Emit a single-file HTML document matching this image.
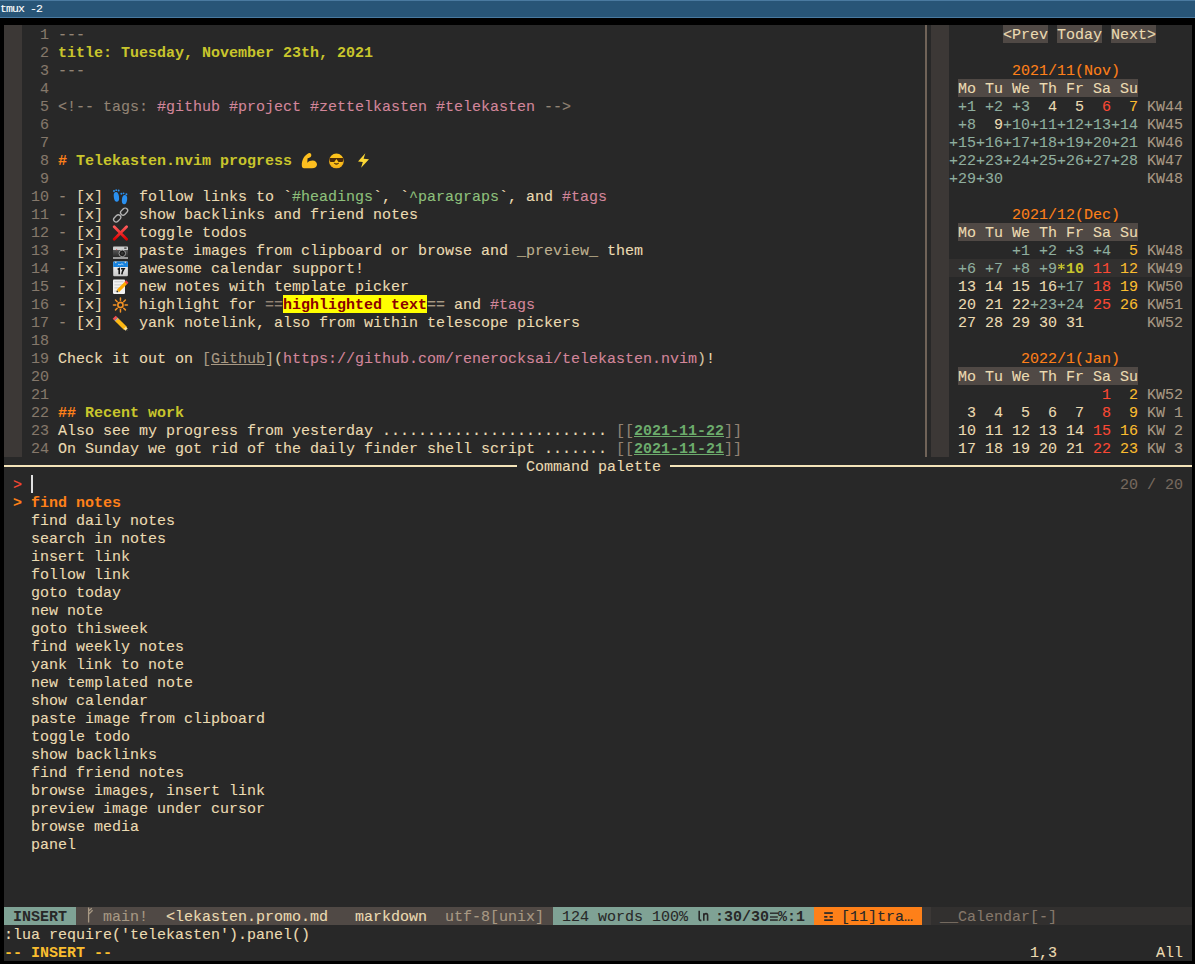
<!DOCTYPE html>
<html><head><meta charset="utf-8"><style>
html,body{margin:0;padding:0;}
body{width:1195px;height:964px;background:#000;position:relative;overflow:hidden;font-family:"Liberation Mono",monospace;font-size:15px;}
div{position:absolute;}
.t{position:absolute;white-space:pre;line-height:18px;height:18px;-webkit-font-smoothing:antialiased;-webkit-text-stroke:0.1px;}
</style></head><body>
<div style="left:0px;top:0px;width:1195px;height:18px;background:#285577;"></div>
<div style="left:0px;top:0px;width:1195px;height:1px;background:#4a7aa0;"></div>
<div style="left:0px;top:17px;width:1195px;height:1px;background:#4a7aa0;"></div>
<span class="t" style="left:0px;top:0px;color:#ffffff;font-size:11.5px;letter-spacing:-0.9px;line-height:17px;">tmux -2</span>
<div style="left:4px;top:25px;width:1188px;height:936px;background:#282828;"></div>
<div style="left:4px;top:25px;width:18px;height:432px;background:#3c3836;"></div>
<div style="left:925px;top:25px;width:2px;height:432px;background:#706358;"></div>
<div style="left:931px;top:25px;width:18px;height:432px;background:#3c3836;"></div>
<span class="t" style="left:22px;top:27px;color:#85786b;">  1</span>
<span class="t" style="left:58px;top:27px;color:#928374;">---</span>
<span class="t" style="left:22px;top:45px;color:#85786b;">  2</span>
<span class="t" style="left:58px;top:45px;color:#c8c52c;font-weight:bold;-webkit-text-stroke:0;">title: Tuesday, November 23th, 2021</span>
<span class="t" style="left:22px;top:63px;color:#85786b;">  3</span>
<span class="t" style="left:58px;top:63px;color:#928374;">---</span>
<span class="t" style="left:22px;top:81px;color:#85786b;">  4</span>
<span class="t" style="left:22px;top:99px;color:#85786b;">  5</span>
<span class="t" style="left:58px;top:99px;color:#928374;">&lt;!-- tags: </span>
<span class="t" style="left:157px;top:99px;color:#d3869b;">#github</span>
<span class="t" style="left:229px;top:99px;color:#d3869b;">#project</span>
<span class="t" style="left:310px;top:99px;color:#d3869b;">#zettelkasten</span>
<span class="t" style="left:436px;top:99px;color:#d3869b;">#telekasten</span>
<span class="t" style="left:535px;top:99px;color:#928374;"> --&gt;</span>
<span class="t" style="left:22px;top:117px;color:#85786b;">  6</span>
<span class="t" style="left:22px;top:135px;color:#85786b;">  7</span>
<span class="t" style="left:22px;top:153px;color:#85786b;">  8</span>
<span class="t" style="left:58px;top:153px;color:#fe8019;font-weight:bold;-webkit-text-stroke:0;"># </span>
<span class="t" style="left:76px;top:153px;color:#c8c52c;font-weight:bold;-webkit-text-stroke:0;">Telekasten.nvim progress</span>
<span class="t" style="left:22px;top:171px;color:#85786b;">  9</span>
<span class="t" style="left:22px;top:189px;color:#85786b;"> 10</span>
<span class="t" style="left:58px;top:189px;color:#928374;">- </span>
<span class="t" style="left:76px;top:189px;color:#ebdbb2;">[x] </span>
<span class="t" style="left:130px;top:189px;color:#ebdbb2;"> follow links to `</span>
<span class="t" style="left:292px;top:189px;color:#8ec07c;">#headings</span>
<span class="t" style="left:373px;top:189px;color:#ebdbb2;">`, `</span>
<span class="t" style="left:409px;top:189px;color:#8ec07c;">^paragraps</span>
<span class="t" style="left:499px;top:189px;color:#ebdbb2;">`, and </span>
<span class="t" style="left:562px;top:189px;color:#d3869b;">#tags</span>
<span class="t" style="left:22px;top:207px;color:#85786b;"> 11</span>
<span class="t" style="left:58px;top:207px;color:#928374;">- </span>
<span class="t" style="left:76px;top:207px;color:#ebdbb2;">[x] </span>
<span class="t" style="left:130px;top:207px;color:#ebdbb2;"> show backlinks and friend notes</span>
<span class="t" style="left:22px;top:225px;color:#85786b;"> 12</span>
<span class="t" style="left:58px;top:225px;color:#928374;">- </span>
<span class="t" style="left:76px;top:225px;color:#ebdbb2;">[x] </span>
<span class="t" style="left:130px;top:225px;color:#ebdbb2;"> toggle todos</span>
<span class="t" style="left:22px;top:243px;color:#85786b;"> 13</span>
<span class="t" style="left:58px;top:243px;color:#928374;">- </span>
<span class="t" style="left:76px;top:243px;color:#ebdbb2;">[x] </span>
<span class="t" style="left:130px;top:243px;color:#ebdbb2;"> paste images from clipboard or browse and </span>
<span class="t" style="left:517px;top:243px;color:#bfb08f;">_preview_</span>
<span class="t" style="left:598px;top:243px;color:#ebdbb2;"> them</span>
<span class="t" style="left:22px;top:261px;color:#85786b;"> 14</span>
<span class="t" style="left:58px;top:261px;color:#928374;">- </span>
<span class="t" style="left:76px;top:261px;color:#ebdbb2;">[x] </span>
<span class="t" style="left:130px;top:261px;color:#ebdbb2;"> awesome calendar support!</span>
<span class="t" style="left:22px;top:279px;color:#85786b;"> 15</span>
<span class="t" style="left:58px;top:279px;color:#928374;">- </span>
<span class="t" style="left:76px;top:279px;color:#ebdbb2;">[x] </span>
<span class="t" style="left:130px;top:279px;color:#ebdbb2;"> new notes with template picker</span>
<span class="t" style="left:22px;top:297px;color:#85786b;"> 16</span>
<span class="t" style="left:58px;top:297px;color:#928374;">- </span>
<span class="t" style="left:76px;top:297px;color:#ebdbb2;">[x] </span>
<span class="t" style="left:130px;top:297px;color:#ebdbb2;"> highlight for </span>
<span class="t" style="left:265px;top:297px;color:#928374;">==</span>
<div style="left:283px;top:295px;width:144px;height:18px;background:#ffff00;"></div>
<span class="t" style="left:283px;top:297px;color:#8b0000;font-weight:bold;-webkit-text-stroke:0;">highlighted text</span>
<span class="t" style="left:427px;top:297px;color:#a89984;">==</span>
<span class="t" style="left:445px;top:297px;color:#ebdbb2;"> and </span>
<span class="t" style="left:490px;top:297px;color:#d3869b;">#tags</span>
<span class="t" style="left:22px;top:315px;color:#85786b;"> 17</span>
<span class="t" style="left:58px;top:315px;color:#928374;">- </span>
<span class="t" style="left:76px;top:315px;color:#ebdbb2;">[x] </span>
<span class="t" style="left:130px;top:315px;color:#ebdbb2;"> yank notelink, also from within telescope pickers</span>
<span class="t" style="left:22px;top:333px;color:#85786b;"> 18</span>
<span class="t" style="left:22px;top:351px;color:#85786b;"> 19</span>
<span class="t" style="left:58px;top:351px;color:#ebdbb2;">Check it out on </span>
<span class="t" style="left:202px;top:351px;color:#a89984;">[</span>
<span class="t" style="left:211px;top:351px;color:#a89984;text-decoration:underline;text-underline-offset:1px;">Github</span>
<span class="t" style="left:265px;top:351px;color:#bdae93;">]</span>
<span class="t" style="left:274px;top:351px;color:#d5c4a1;">(</span>
<span class="t" style="left:283px;top:351px;color:#d3869b;">https:</span>
<span class="t" style="left:337px;top:351px;color:#d3869b;">//github.com/renerocksai/telekasten.nvim</span>
<span class="t" style="left:697px;top:351px;color:#d5c4a1;">)</span>
<span class="t" style="left:706px;top:351px;color:#ebdbb2;">!</span>
<span class="t" style="left:22px;top:369px;color:#85786b;"> 20</span>
<span class="t" style="left:22px;top:387px;color:#85786b;"> 21</span>
<span class="t" style="left:22px;top:405px;color:#85786b;"> 22</span>
<span class="t" style="left:58px;top:405px;color:#fe8019;font-weight:bold;-webkit-text-stroke:0;">## </span>
<span class="t" style="left:85px;top:405px;color:#c8c52c;font-weight:bold;-webkit-text-stroke:0;">Recent work</span>
<span class="t" style="left:22px;top:423px;color:#85786b;"> 23</span>
<span class="t" style="left:58px;top:423px;color:#ebdbb2;">Also see my progress from yesterday ......................... </span>
<span class="t" style="left:616px;top:423px;color:#928374;">[[</span>
<span class="t" style="left:634px;top:423px;color:#6cab6c;font-weight:bold;-webkit-text-stroke:0;text-decoration:underline;text-underline-offset:1px;">2021-11-22</span>
<span class="t" style="left:724px;top:423px;color:#928374;">]]</span>
<span class="t" style="left:22px;top:441px;color:#85786b;"> 24</span>
<span class="t" style="left:58px;top:441px;color:#ebdbb2;">On Sunday we got rid of the daily finder shell script ....... </span>
<span class="t" style="left:616px;top:441px;color:#928374;">[[</span>
<span class="t" style="left:634px;top:441px;color:#6cab6c;font-weight:bold;-webkit-text-stroke:0;text-decoration:underline;text-underline-offset:1px;">2021-11-21</span>
<span class="t" style="left:724px;top:441px;color:#928374;">]]</span>
<div style="left:1003px;top:25px;width:45px;height:18px;background:#504945;"></div>
<span class="t" style="left:1003px;top:27px;color:#ebdbb2;">&lt;Prev</span>
<div style="left:1057px;top:25px;width:45px;height:18px;background:#504945;"></div>
<span class="t" style="left:1057px;top:27px;color:#ebdbb2;">Today</span>
<div style="left:1111px;top:25px;width:45px;height:18px;background:#504945;"></div>
<span class="t" style="left:1111px;top:27px;color:#ebdbb2;">Next&gt;</span>
<span class="t" style="left:1012px;top:63px;color:#fe8019;">2021/11(Nov)</span>
<div style="left:958px;top:79px;width:180px;height:18px;background:#504945;"></div>
<span class="t" style="left:958px;top:81px;color:#ebdbb2;">Mo Tu We Th Fr Sa Su</span>
<span class="t" style="left:949px;top:99px;color:#8fae9f;"> +1</span>
<span class="t" style="left:976px;top:99px;color:#8fae9f;"> +2</span>
<span class="t" style="left:1003px;top:99px;color:#8fae9f;"> +3</span>
<span class="t" style="left:1030px;top:99px;color:#ebdbb2;">  4</span>
<span class="t" style="left:1057px;top:99px;color:#ebdbb2;">  5</span>
<span class="t" style="left:1084px;top:99px;color:#fb4934;">  6</span>
<span class="t" style="left:1111px;top:99px;color:#fabd2f;">  7</span>
<span class="t" style="left:1147px;top:99px;color:#a89984;">KW44</span>
<span class="t" style="left:949px;top:117px;color:#8fae9f;"> +8</span>
<span class="t" style="left:976px;top:117px;color:#ebdbb2;">  9</span>
<span class="t" style="left:1003px;top:117px;color:#8fae9f;">+10</span>
<span class="t" style="left:1030px;top:117px;color:#8fae9f;">+11</span>
<span class="t" style="left:1057px;top:117px;color:#8fae9f;">+12</span>
<span class="t" style="left:1084px;top:117px;color:#8fae9f;">+13</span>
<span class="t" style="left:1111px;top:117px;color:#8fae9f;">+14</span>
<span class="t" style="left:1147px;top:117px;color:#a89984;">KW45</span>
<span class="t" style="left:949px;top:135px;color:#8fae9f;">+15</span>
<span class="t" style="left:976px;top:135px;color:#8fae9f;">+16</span>
<span class="t" style="left:1003px;top:135px;color:#8fae9f;">+17</span>
<span class="t" style="left:1030px;top:135px;color:#8fae9f;">+18</span>
<span class="t" style="left:1057px;top:135px;color:#8fae9f;">+19</span>
<span class="t" style="left:1084px;top:135px;color:#8fae9f;">+20</span>
<span class="t" style="left:1111px;top:135px;color:#8fae9f;">+21</span>
<span class="t" style="left:1147px;top:135px;color:#a89984;">KW46</span>
<span class="t" style="left:949px;top:153px;color:#8fae9f;">+22</span>
<span class="t" style="left:976px;top:153px;color:#8fae9f;">+23</span>
<span class="t" style="left:1003px;top:153px;color:#8fae9f;">+24</span>
<span class="t" style="left:1030px;top:153px;color:#8fae9f;">+25</span>
<span class="t" style="left:1057px;top:153px;color:#8fae9f;">+26</span>
<span class="t" style="left:1084px;top:153px;color:#8fae9f;">+27</span>
<span class="t" style="left:1111px;top:153px;color:#8fae9f;">+28</span>
<span class="t" style="left:1147px;top:153px;color:#a89984;">KW47</span>
<span class="t" style="left:949px;top:171px;color:#8fae9f;">+29</span>
<span class="t" style="left:976px;top:171px;color:#8fae9f;">+30</span>
<span class="t" style="left:1147px;top:171px;color:#a89984;">KW48</span>
<div style="left:949px;top:259px;width:243px;height:18px;background:#32302f;"></div>
<span class="t" style="left:1012px;top:207px;color:#fe8019;">2021/12(Dec)</span>
<div style="left:958px;top:223px;width:180px;height:18px;background:#504945;"></div>
<span class="t" style="left:958px;top:225px;color:#ebdbb2;">Mo Tu We Th Fr Sa Su</span>
<span class="t" style="left:1003px;top:243px;color:#8fae9f;"> +1</span>
<span class="t" style="left:1030px;top:243px;color:#8fae9f;"> +2</span>
<span class="t" style="left:1057px;top:243px;color:#8fae9f;"> +3</span>
<span class="t" style="left:1084px;top:243px;color:#8fae9f;"> +4</span>
<span class="t" style="left:1111px;top:243px;color:#fabd2f;">  5</span>
<span class="t" style="left:1147px;top:243px;color:#a89984;">KW48</span>
<span class="t" style="left:949px;top:261px;color:#8fae9f;"> +6</span>
<span class="t" style="left:976px;top:261px;color:#8fae9f;"> +7</span>
<span class="t" style="left:1003px;top:261px;color:#8fae9f;"> +8</span>
<span class="t" style="left:1030px;top:261px;color:#8fae9f;"> +9</span>
<span class="t" style="left:1084px;top:261px;color:#fb4934;"> 11</span>
<span class="t" style="left:1111px;top:261px;color:#fabd2f;"> 12</span>
<span class="t" style="left:1147px;top:261px;color:#a89984;">KW49</span>
<span class="t" style="left:949px;top:279px;color:#ebdbb2;"> 13</span>
<span class="t" style="left:976px;top:279px;color:#ebdbb2;"> 14</span>
<span class="t" style="left:1003px;top:279px;color:#ebdbb2;"> 15</span>
<span class="t" style="left:1030px;top:279px;color:#ebdbb2;"> 16</span>
<span class="t" style="left:1057px;top:279px;color:#8fae9f;">+17</span>
<span class="t" style="left:1084px;top:279px;color:#fb4934;"> 18</span>
<span class="t" style="left:1111px;top:279px;color:#fabd2f;"> 19</span>
<span class="t" style="left:1147px;top:279px;color:#a89984;">KW50</span>
<span class="t" style="left:949px;top:297px;color:#ebdbb2;"> 20</span>
<span class="t" style="left:976px;top:297px;color:#ebdbb2;"> 21</span>
<span class="t" style="left:1003px;top:297px;color:#ebdbb2;"> 22</span>
<span class="t" style="left:1030px;top:297px;color:#8fae9f;">+23</span>
<span class="t" style="left:1057px;top:297px;color:#8fae9f;">+24</span>
<span class="t" style="left:1084px;top:297px;color:#fb4934;"> 25</span>
<span class="t" style="left:1111px;top:297px;color:#fabd2f;"> 26</span>
<span class="t" style="left:1147px;top:297px;color:#a89984;">KW51</span>
<span class="t" style="left:949px;top:315px;color:#ebdbb2;"> 27</span>
<span class="t" style="left:976px;top:315px;color:#ebdbb2;"> 28</span>
<span class="t" style="left:1003px;top:315px;color:#ebdbb2;"> 29</span>
<span class="t" style="left:1030px;top:315px;color:#ebdbb2;"> 30</span>
<span class="t" style="left:1057px;top:315px;color:#ebdbb2;"> 31</span>
<span class="t" style="left:1147px;top:315px;color:#a89984;">KW52</span>
<svg style="position:absolute;left:1054px;top:259px" width="15" height="15" viewBox="0 0 15 15"><g stroke="#c8c52c" stroke-width="1.3" transform="translate(-1054 -259)"><path d="M1061.4 263.2 V270 M1058.2 264.8 L1064.6 268.4 M1058.2 268.4 L1064.6 264.8"/></g></svg>
<span class="t" style="left:1066px;top:261px;color:#c8c52c;font-weight:bold;-webkit-text-stroke:0;">10</span>
<span class="t" style="left:1021px;top:351px;color:#fe8019;">2022/1(Jan)</span>
<div style="left:958px;top:367px;width:180px;height:18px;background:#504945;"></div>
<span class="t" style="left:958px;top:369px;color:#ebdbb2;">Mo Tu We Th Fr Sa Su</span>
<span class="t" style="left:1084px;top:387px;color:#fb4934;">  1</span>
<span class="t" style="left:1111px;top:387px;color:#fabd2f;">  2</span>
<span class="t" style="left:1147px;top:387px;color:#a89984;">KW52</span>
<span class="t" style="left:949px;top:405px;color:#ebdbb2;">  3</span>
<span class="t" style="left:976px;top:405px;color:#ebdbb2;">  4</span>
<span class="t" style="left:1003px;top:405px;color:#ebdbb2;">  5</span>
<span class="t" style="left:1030px;top:405px;color:#ebdbb2;">  6</span>
<span class="t" style="left:1057px;top:405px;color:#ebdbb2;">  7</span>
<span class="t" style="left:1084px;top:405px;color:#fb4934;">  8</span>
<span class="t" style="left:1111px;top:405px;color:#fabd2f;">  9</span>
<span class="t" style="left:1147px;top:405px;color:#a89984;">KW 1</span>
<span class="t" style="left:949px;top:423px;color:#ebdbb2;"> 10</span>
<span class="t" style="left:976px;top:423px;color:#ebdbb2;"> 11</span>
<span class="t" style="left:1003px;top:423px;color:#ebdbb2;"> 12</span>
<span class="t" style="left:1030px;top:423px;color:#ebdbb2;"> 13</span>
<span class="t" style="left:1057px;top:423px;color:#ebdbb2;"> 14</span>
<span class="t" style="left:1084px;top:423px;color:#fb4934;"> 15</span>
<span class="t" style="left:1111px;top:423px;color:#fabd2f;"> 16</span>
<span class="t" style="left:1147px;top:423px;color:#a89984;">KW 2</span>
<span class="t" style="left:949px;top:441px;color:#ebdbb2;"> 17</span>
<span class="t" style="left:976px;top:441px;color:#ebdbb2;"> 18</span>
<span class="t" style="left:1003px;top:441px;color:#ebdbb2;"> 19</span>
<span class="t" style="left:1030px;top:441px;color:#ebdbb2;"> 20</span>
<span class="t" style="left:1057px;top:441px;color:#ebdbb2;"> 21</span>
<span class="t" style="left:1084px;top:441px;color:#fb4934;"> 22</span>
<span class="t" style="left:1111px;top:441px;color:#fabd2f;"> 23</span>
<span class="t" style="left:1147px;top:441px;color:#a89984;">KW 3</span>
<svg style="position:absolute;left:298px;top:150px" width="24" height="20" viewBox="0 0 24 20"><path d="M11 3 C12.6 2.6 13.8 4.4 13.2 6 C12.7 7.4 11.2 8 9.6 8.3 L9.3 12.8 C10.6 11.2 12.5 10.5 14.6 10.5 C17.2 10.5 19 12.2 19 14.6 C19 17 17 18.2 14 18.2 L6 18.2 C4.6 18.2 3.8 17.2 3.8 15.2 C3.8 10 6 5.5 11 3 Z" fill="#fdbf1f"/></svg>
<svg style="position:absolute;left:325px;top:150px" width="24" height="20" viewBox="0 0 24 20"><defs><radialGradient id="fg" cx="0.5" cy="0.4" r="0.6"><stop offset="0.6" stop-color="#fcc21b"/><stop offset="1" stop-color="#f0a818"/></radialGradient></defs><circle cx="11.4" cy="10.9" r="7.4" fill="url(#fg)"/><path d="M4.4 8.1 L18.4 8.1 L18.1 11.2 Q17.8 11.9 16.8 11.9 L13.5 11.9 L11.4 8.9 L9.3 11.9 L6 11.9 Q5 11.9 4.7 11.2 Z" fill="#4a2a0a"/><path d="M8.9 13.2 Q11.4 16 13.9 13.2 Q11.4 14 8.9 13.2 Z" fill="#5a3510" stroke="#5a3510" stroke-width="0.6"/></svg>
<svg style="position:absolute;left:352px;top:150px" width="24" height="20" viewBox="0 0 24 20"><polygon points="13.3,3.3 6,11.4 10.8,12 9.1,17.8 17,9.3 11.6,8.7" fill="#fdd835"/></svg>
<svg style="position:absolute;left:108px;top:187px" width="24" height="18" viewBox="0 0 24 18"><ellipse cx="8.4" cy="9.8" rx="2.6" ry="4.9" fill="#2a90f0" transform="rotate(-8 8.4 9.8)"/><circle cx="6" cy="4" r="1" fill="#2a90f0"/><circle cx="8.2" cy="3.2" r="0.9" fill="#2a90f0"/><circle cx="10.6" cy="3.6" r="1" fill="#2a90f0"/><ellipse cx="16.5" cy="12.6" rx="2.6" ry="4.6" fill="#2a90f0" transform="rotate(8 16.5 12.6)"/><circle cx="13.4" cy="6.8" r="1" fill="#2a90f0"/><circle cx="15.6" cy="6.3" r="0.9" fill="#2a90f0"/><circle cx="18.4" cy="7.2" r="1" fill="#2a90f0"/></svg>
<svg style="position:absolute;left:108px;top:205px" width="24" height="18" viewBox="0 0 24 18"><rect x="13.6" y="2.6" width="5" height="8" rx="2.5" fill="none" stroke="#b4b4b4" stroke-width="1.3" transform="rotate(45 16.1 6.6)"/><rect x="6.7" y="9.4" width="5" height="8" rx="2.5" fill="none" stroke="#b4b4b4" stroke-width="1.3" transform="rotate(45 9.2 13.4)"/></svg>
<svg style="position:absolute;left:108px;top:223px" width="24" height="18" viewBox="0 0 24 18"><defs><linearGradient id="xg" x1="0" y1="0" x2="0" y2="1"><stop offset="0" stop-color="#ff5a5a"/><stop offset="1" stop-color="#e00000"/></linearGradient></defs><path d="M6.2 3.8 L18.6 16.3 M18.6 3.8 L6.2 16.3" stroke="url(#xg)" stroke-width="2.7" stroke-linecap="round"/></svg>
<svg style="position:absolute;left:108px;top:241px" width="24" height="18" viewBox="0 0 24 18"><defs><linearGradient id="camg" x1="0" y1="0" x2="0" y2="1"><stop offset="0" stop-color="#555"/><stop offset="1" stop-color="#2a2a2a"/></linearGradient></defs><rect x="5" y="5.6" width="15" height="3.6" rx="0.8" fill="#cfcfcf"/><rect x="5" y="9.2" width="15" height="6.6" fill="url(#camg)"/><rect x="5" y="16" width="15" height="2" fill="#9a9a9a"/><circle cx="14.3" cy="12.4" r="3.3" fill="#1c1c1c" stroke="#a8a8a8" stroke-width="0.9"/><circle cx="14.3" cy="12.4" r="1.3" fill="#3a3a3a"/><rect x="16" y="6.4" width="2.8" height="1.4" rx="0.7" fill="#3a3a3a"/><circle cx="8.6" cy="8.6" r="0.6" fill="#e06060"/></svg>
<svg style="position:absolute;left:108px;top:259px" width="24" height="18" viewBox="0 0 24 18"><defs><linearGradient id="cg" x1="0" y1="0" x2="0" y2="1"><stop offset="0" stop-color="#ffffff"/><stop offset="1" stop-color="#c8c8c8"/></linearGradient></defs><rect x="5.2" y="2.6" width="14.7" height="14.7" rx="1" fill="url(#cg)"/><path d="M5.2 3.6 Q5.2 2.6 6.2 2.6 L18.9 2.6 Q19.9 2.6 19.9 3.6 L19.9 8 L5.2 8 Z" fill="#1582e0"/><circle cx="7.8" cy="3.4" r="0.8" fill="#d8d0c0"/><circle cx="17.4" cy="3.4" r="0.8" fill="#d8d0c0"/><path d="M10 6.2 Q11 4.4 11.4 5.6 Q12.4 6.4 13.2 5 Q14 4.6 15.4 5.8" stroke="#b8dcf8" stroke-width="1" fill="none"/><path d="M9.6 10.4 L11.2 9.6 V15.3 M13 9.8 H16 Q14.5 12 13.8 15.3" stroke="#151515" stroke-width="1.6" fill="none"/></svg>
<svg style="position:absolute;left:108px;top:277px" width="24" height="18" viewBox="0 0 24 18"><rect x="5" y="2.6" width="12" height="14.3" rx="0.8" fill="#f2f2f2"/><path d="M6.4 4.8 H15.5 M6.4 7.9 H15.5 M6.4 10.9 H11.5 M6.4 14 H8.5" stroke="#c8c8c8" stroke-width="1"/><path d="M10 13.8 L18.2 5.6" stroke="#ffaa00" stroke-width="3.3"/><path d="M17.8 6 L19.3 4.5" stroke="#f04040" stroke-width="3.3"/><path d="M9.2 14.6 L10.3 13.5" stroke="#f8d070" stroke-width="2.5"/><circle cx="9.3" cy="14.4" r="0.9" fill="#333"/></svg>
<svg style="position:absolute;left:108px;top:295px" width="24" height="18" viewBox="0 0 24 18"><circle cx="12.45" cy="9.94" r="2.6" fill="none" stroke="#f39224" stroke-width="1.6"/><path d="M17.05 9.94 L19.45 9.94" stroke="#f39224" stroke-width="1.5" stroke-linecap="round"/><path d="M15.70 13.19 L17.40 14.89" stroke="#f39224" stroke-width="1.5" stroke-linecap="round"/><path d="M12.45 14.54 L12.45 16.94" stroke="#f39224" stroke-width="1.5" stroke-linecap="round"/><path d="M9.20 13.19 L7.50 14.89" stroke="#f39224" stroke-width="1.5" stroke-linecap="round"/><path d="M7.85 9.94 L5.45 9.94" stroke="#f39224" stroke-width="1.5" stroke-linecap="round"/><path d="M9.20 6.69 L7.50 4.99" stroke="#f39224" stroke-width="1.5" stroke-linecap="round"/><path d="M12.45 5.34 L12.45 2.94" stroke="#f39224" stroke-width="1.5" stroke-linecap="round"/><path d="M15.70 6.69 L17.40 4.99" stroke="#f39224" stroke-width="1.5" stroke-linecap="round"/></svg>
<svg style="position:absolute;left:108px;top:313px" width="24" height="18" viewBox="0 0 24 18"><path d="M8.2 6.2 L17.6 15.6" stroke="#fdb813" stroke-width="4.3"/><path d="M6.2 4.2 L8 6" stroke="#f25050" stroke-width="4.3"/><path d="M8 6 L8.8 6.8" stroke="#aab" stroke-width="4.3"/><path d="M16.8 14.8 L18.6 16.6" stroke="#fbe39a" stroke-width="3"/><circle cx="19.2" cy="17.2" r="0.8" fill="#444"/></svg>
<div style="left:4px;top:465px;width:1188px;height:2px;background:#f4e4b9;"></div>
<div style="left:517px;top:457px;width:153px;height:18px;background:#282828;"></div>
<span class="t" style="left:526px;top:459px;color:#ebdbb2;">Command palette</span>
<span class="t" style="left:13px;top:477px;color:#fb4934;">&gt;</span>
<div style="left:31px;top:475px;width:2px;height:18px;background:#e0e0e0;"></div>
<span class="t" style="left:1120px;top:477px;color:#776a5f;">20 / 20</span>
<span class="t" style="left:13px;top:495px;color:#fe8019;font-weight:bold;-webkit-text-stroke:0;">&gt;</span>
<span class="t" style="left:31px;top:495px;color:#fe8019;font-weight:bold;-webkit-text-stroke:0;">find notes</span>
<span class="t" style="left:31px;top:513px;color:#ebdbb2;">find daily notes</span>
<span class="t" style="left:31px;top:531px;color:#ebdbb2;">search in notes</span>
<span class="t" style="left:31px;top:549px;color:#ebdbb2;">insert link</span>
<span class="t" style="left:31px;top:567px;color:#ebdbb2;">follow link</span>
<span class="t" style="left:31px;top:585px;color:#ebdbb2;">goto today</span>
<span class="t" style="left:31px;top:603px;color:#ebdbb2;">new note</span>
<span class="t" style="left:31px;top:621px;color:#ebdbb2;">goto thisweek</span>
<span class="t" style="left:31px;top:639px;color:#ebdbb2;">find weekly notes</span>
<span class="t" style="left:31px;top:657px;color:#ebdbb2;">yank link to note</span>
<span class="t" style="left:31px;top:675px;color:#ebdbb2;">new templated note</span>
<span class="t" style="left:31px;top:693px;color:#ebdbb2;">show calendar</span>
<span class="t" style="left:31px;top:711px;color:#ebdbb2;">paste image from clipboard</span>
<span class="t" style="left:31px;top:729px;color:#ebdbb2;">toggle todo</span>
<span class="t" style="left:31px;top:747px;color:#ebdbb2;">show backlinks</span>
<span class="t" style="left:31px;top:765px;color:#ebdbb2;">find friend notes</span>
<span class="t" style="left:31px;top:783px;color:#ebdbb2;">browse images, insert link</span>
<span class="t" style="left:31px;top:801px;color:#ebdbb2;">preview image under cursor</span>
<span class="t" style="left:31px;top:819px;color:#ebdbb2;">browse media</span>
<span class="t" style="left:31px;top:837px;color:#ebdbb2;">panel</span>
<div style="left:4px;top:907px;width:72px;height:18px;background:#7fa295;"></div>
<span class="t" style="left:13px;top:909px;color:#282828;font-weight:bold;-webkit-text-stroke:0;">INSERT</span>
<div style="left:76px;top:907px;width:477px;height:18px;background:#504945;"></div>
<svg style="position:absolute;left:80px;top:905px" width="20" height="22" viewBox="0 0 20 22"><path d="M88.6 907.6 V922.6 M88.6 911 L91.8 908.2 M88.6 914.4 L92.6 910.3" stroke="#a89984" stroke-width="1.3" fill="none" transform="translate(-80 -905)"/></svg>
<span class="t" style="left:103px;top:909px;color:#a89984;">main!</span>
<span class="t" style="left:166px;top:909px;color:#ebdbb2;">&lt;lekasten.promo.md</span>
<span class="t" style="left:355px;top:909px;color:#ebdbb2;">markdown</span>
<span class="t" style="left:445px;top:909px;color:#a89984;">utf-8[unix]</span>
<div style="left:553px;top:907px;width:261px;height:18px;background:#7fa295;"></div>
<span class="t" style="left:553px;top:909px;color:#282828;"> 124 words 100% </span>
<svg style="position:absolute;left:690px;top:905px" width="30" height="22" viewBox="0 0 30 22"><g fill="none" stroke="#282828" stroke-width="1.6" transform="translate(-690 -905)"><path d="M699.2 910.8 V919 Q699.2 920.5 701.4 920.5"/><path d="M703.8 913.3 V920.8 M703.8 915.5 Q704.5 913.6 706 913.6 Q707.6 913.6 707.6 915.5 V920.8"/></g></svg>
<span class="t" style="left:715px;top:909px;color:#282828;font-weight:bold;-webkit-text-stroke:0;">:30/30</span>
<svg style="position:absolute;left:760px;top:905px" width="30" height="22" viewBox="0 0 30 22"><g fill="#282828" transform="translate(-760 -905)"><rect x="770" y="912.5" width="8" height="1.4"/><rect x="770" y="916.3" width="7.8" height="1.4"/><rect x="770" y="919.3" width="7.8" height="1.5"/></g></svg>
<span class="t" style="left:778px;top:909px;color:#282828;font-weight:bold;-webkit-text-stroke:0;">%:1</span>
<div style="left:814px;top:907px;width:108px;height:18px;background:#fe8019;"></div>
<svg style="position:absolute;left:810px;top:905px" width="40" height="22" viewBox="0 0 40 22"><g fill="#282828" transform="translate(-810 -905)"><rect x="824.2" y="912.2" width="8.6" height="1.7"/><rect x="824.2" y="916" width="3.2" height="1.7"/><rect x="829.6" y="916" width="3.2" height="1.7"/><rect x="824.2" y="919.3" width="8.6" height="1.7"/></g></svg>
<span class="t" style="left:841px;top:909px;color:#282828;">[11]tra…</span>
<div style="left:922px;top:907px;width:9px;height:18px;background:#3c3836;"></div>
<div style="left:931px;top:907px;width:261px;height:18px;background:#32302f;"></div>
<span class="t" style="left:940px;top:909px;color:#85786b;">__Calendar[-]</span>
<span class="t" style="left:4px;top:927px;color:#ebdbb2;">:lua require(&#x27;telekasten&#x27;).panel()</span>
<span class="t" style="left:4px;top:945px;color:#fabd2f;font-weight:bold;-webkit-text-stroke:0;">-- INSERT --</span>
<span class="t" style="left:1030px;top:945px;color:#ebdbb2;">1,3</span>
<span class="t" style="left:1156px;top:945px;color:#ebdbb2;">All</span>
</body></html>
